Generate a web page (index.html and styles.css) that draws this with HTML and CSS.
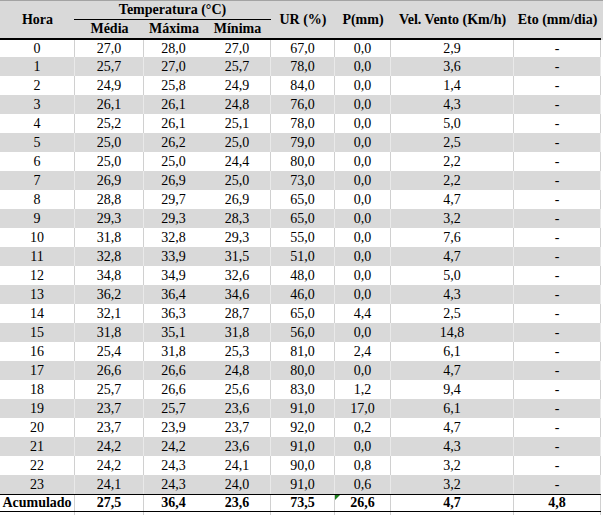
FILE: index.html
```html
<!DOCTYPE html>
<html lang="pt">
<head>
<meta charset="utf-8">
<title>Dados horários</title>
<link rel="stylesheet" href="styles.css">
</head>
<body>
<div class="sheet">
  <div class="head-wrap">
    <div class="head">
      <div class="h span2 c1">Hora</div>
      <div class="h temp">Temperatura (°C)</div>
      <div class="h span2 c5">UR (%)</div>
      <div class="h span2 c6">P(mm)</div>
      <div class="h span2 c7">Vel. Vento (Km/h)</div>
      <div class="h span2 c8">Eto (mm/dia)</div>
      <div class="h sub c2">Média</div>
      <div class="h sub c3">Máxima</div>
      <div class="h sub c4">Mínima</div>
    </div>
  </div>
  <div class="rows" id="rows">
    <div class="row first"><div class="c">0</div><div class="c">27,0</div><div class="c nb">28,0</div><div class="c">27,0</div><div class="c">67,0</div><div class="c">0,0</div><div class="c">2,9</div><div class="c">-</div></div>
    <div class="row alt"><div class="c">1</div><div class="c">25,7</div><div class="c nb">27,0</div><div class="c">25,7</div><div class="c">78,0</div><div class="c">0,0</div><div class="c">3,6</div><div class="c">-</div></div>
    <div class="row"><div class="c">2</div><div class="c">24,9</div><div class="c nb">25,8</div><div class="c">24,9</div><div class="c">84,0</div><div class="c">0,0</div><div class="c">1,4</div><div class="c">-</div></div>
    <div class="row alt"><div class="c">3</div><div class="c">26,1</div><div class="c nb">26,1</div><div class="c">24,8</div><div class="c">76,0</div><div class="c">0,0</div><div class="c">4,3</div><div class="c">-</div></div>
    <div class="row"><div class="c">4</div><div class="c">25,2</div><div class="c nb">26,1</div><div class="c">25,1</div><div class="c">78,0</div><div class="c">0,0</div><div class="c">5,0</div><div class="c">-</div></div>
    <div class="row alt"><div class="c">5</div><div class="c">25,0</div><div class="c nb">26,2</div><div class="c">25,0</div><div class="c">79,0</div><div class="c">0,0</div><div class="c">2,5</div><div class="c">-</div></div>
    <div class="row"><div class="c">6</div><div class="c">25,0</div><div class="c nb">25,0</div><div class="c">24,4</div><div class="c">80,0</div><div class="c">0,0</div><div class="c">2,2</div><div class="c">-</div></div>
    <div class="row alt"><div class="c">7</div><div class="c">26,9</div><div class="c nb">26,9</div><div class="c">25,0</div><div class="c">73,0</div><div class="c">0,0</div><div class="c">2,2</div><div class="c">-</div></div>
    <div class="row"><div class="c">8</div><div class="c">28,8</div><div class="c nb">29,7</div><div class="c">26,9</div><div class="c">65,0</div><div class="c">0,0</div><div class="c">4,7</div><div class="c">-</div></div>
    <div class="row alt"><div class="c">9</div><div class="c">29,3</div><div class="c nb">29,3</div><div class="c">28,3</div><div class="c">65,0</div><div class="c">0,0</div><div class="c">3,2</div><div class="c">-</div></div>
    <div class="row"><div class="c">10</div><div class="c">31,8</div><div class="c nb">32,8</div><div class="c">29,3</div><div class="c">55,0</div><div class="c">0,0</div><div class="c">7,6</div><div class="c">-</div></div>
    <div class="row alt"><div class="c">11</div><div class="c">32,8</div><div class="c nb">33,9</div><div class="c">31,5</div><div class="c">51,0</div><div class="c">0,0</div><div class="c">4,7</div><div class="c">-</div></div>
    <div class="row"><div class="c">12</div><div class="c">34,8</div><div class="c nb">34,9</div><div class="c">32,6</div><div class="c">48,0</div><div class="c">0,0</div><div class="c">5,0</div><div class="c">-</div></div>
    <div class="row alt"><div class="c">13</div><div class="c">36,2</div><div class="c nb">36,4</div><div class="c">34,6</div><div class="c">46,0</div><div class="c">0,0</div><div class="c">4,3</div><div class="c">-</div></div>
    <div class="row"><div class="c">14</div><div class="c">32,1</div><div class="c nb">36,3</div><div class="c">28,7</div><div class="c">65,0</div><div class="c">4,4</div><div class="c">2,5</div><div class="c">-</div></div>
    <div class="row alt"><div class="c">15</div><div class="c">31,8</div><div class="c nb">35,1</div><div class="c">31,8</div><div class="c">56,0</div><div class="c">0,0</div><div class="c">14,8</div><div class="c">-</div></div>
    <div class="row"><div class="c">16</div><div class="c">25,4</div><div class="c nb">31,8</div><div class="c">25,3</div><div class="c">81,0</div><div class="c">2,4</div><div class="c">6,1</div><div class="c">-</div></div>
    <div class="row alt"><div class="c">17</div><div class="c">26,6</div><div class="c nb">26,6</div><div class="c">24,8</div><div class="c">80,0</div><div class="c">0,0</div><div class="c">4,7</div><div class="c">-</div></div>
    <div class="row"><div class="c">18</div><div class="c">25,7</div><div class="c nb">26,6</div><div class="c">25,6</div><div class="c">83,0</div><div class="c">1,2</div><div class="c">9,4</div><div class="c">-</div></div>
    <div class="row alt"><div class="c">19</div><div class="c">23,7</div><div class="c nb">25,7</div><div class="c">23,6</div><div class="c">91,0</div><div class="c">17,0</div><div class="c">6,1</div><div class="c">-</div></div>
    <div class="row"><div class="c">20</div><div class="c">23,7</div><div class="c nb">23,9</div><div class="c">23,7</div><div class="c">92,0</div><div class="c">0,2</div><div class="c">4,7</div><div class="c">-</div></div>
    <div class="row alt"><div class="c">21</div><div class="c">24,2</div><div class="c nb">24,2</div><div class="c">23,6</div><div class="c">91,0</div><div class="c">0,0</div><div class="c">4,3</div><div class="c">-</div></div>
    <div class="row"><div class="c">22</div><div class="c">24,2</div><div class="c nb">24,3</div><div class="c">24,1</div><div class="c">90,0</div><div class="c">0,8</div><div class="c">3,2</div><div class="c">-</div></div>
    <div class="row alt"><div class="c">23</div><div class="c">24,1</div><div class="c nb">24,3</div><div class="c">24,0</div><div class="c">91,0</div><div class="c">0,6</div><div class="c">3,2</div><div class="c">-</div></div>
    <div class="row total"><div class="c">Acumulado</div><div class="c">27,5</div><div class="c nb">36,4</div><div class="c">23,6</div><div class="c">73,5</div><div class="c flag">26,6</div><div class="c">4,7</div><div class="c">4,8</div></div>
    <div class="row tail"><div class="c"></div><div class="c"></div><div class="c nb"></div><div class="c"></div><div class="c"></div><div class="c"></div><div class="c"></div><div class="c"></div></div>
  </div>
</div>
</body>
</html>
```
FILE: styles.css
```css
html, body {
  margin: 0;
  padding: 0;
  background: #ffffff;
}

body {
  font-family: "Liberation Serif", "Times New Roman", serif;
  font-size: 14px;
  color: #000000;
}

.sheet {
  width: 603px;
}

.head-wrap {
  width: 603px;
  background: #d9d9d9;
  border-top: 1px solid #a3a3a3;
}

.head {
  width: 601px;
  display: grid;
  grid-template-columns: 75px 69px 60px 67px 64px 56px 123px 87px;
  grid-template-rows: 19px 18px;
  border-bottom: 2px solid #000000;
}

.h {
  font-weight: bold;
  text-align: center;
  white-space: nowrap;
  display: flex;
  align-items: center;
  justify-content: center;
}

.span2 { grid-row: 1 / 3; }
.c1 { grid-column: 1; }
.c2 { grid-column: 2; }
.c3 { grid-column: 3; }
.c4 { grid-column: 4; }
.c5 { grid-column: 5; }
.c6 { grid-column: 6; }
.c7 { grid-column: 7; }
.c8 { grid-column: 8; }

.temp {
  grid-column: 2 / 5;
  grid-row: 1;
  border-bottom: 1px solid #000000;
  margin-left: -1px;
  box-sizing: border-box;
  padding-bottom: 1px;
}

.sub {
  grid-row: 2;
}

.rows {
  width: 601px;
}

.row {
  display: grid;
  grid-template-columns: 75px 69px 60px 67px 64px 56px 123px 87px;
  height: 19px;
  line-height: 19px;
  box-sizing: border-box;
}

.row.first {
  height: 17px;
  line-height: 17px;
}

.row.alt {
  background: #d9d9d9;
}

.c {
  text-align: center;
  white-space: nowrap;
  border-right: 1px solid #d0d0d0;
}

.row.alt .c {
  border-right-color: #e9e9e9;
}

.c.nb {
  border-right-color: transparent;
}

.row.alt .c.nb {
  border-right-color: transparent;
}

.row.total {
  height: 18px;
  line-height: 16px;
  border-top: 1px solid #000000;
  border-bottom: 1px solid #000000;
  font-weight: bold;
}

.row.tail {
  height: 4px;
}

.flag {
  position: relative;
}

.flag::before {
  content: "";
  position: absolute;
  top: 0;
  left: 0;
  border-top: 5px solid #1e7e1e;
  border-right: 5px solid transparent;
}
```
